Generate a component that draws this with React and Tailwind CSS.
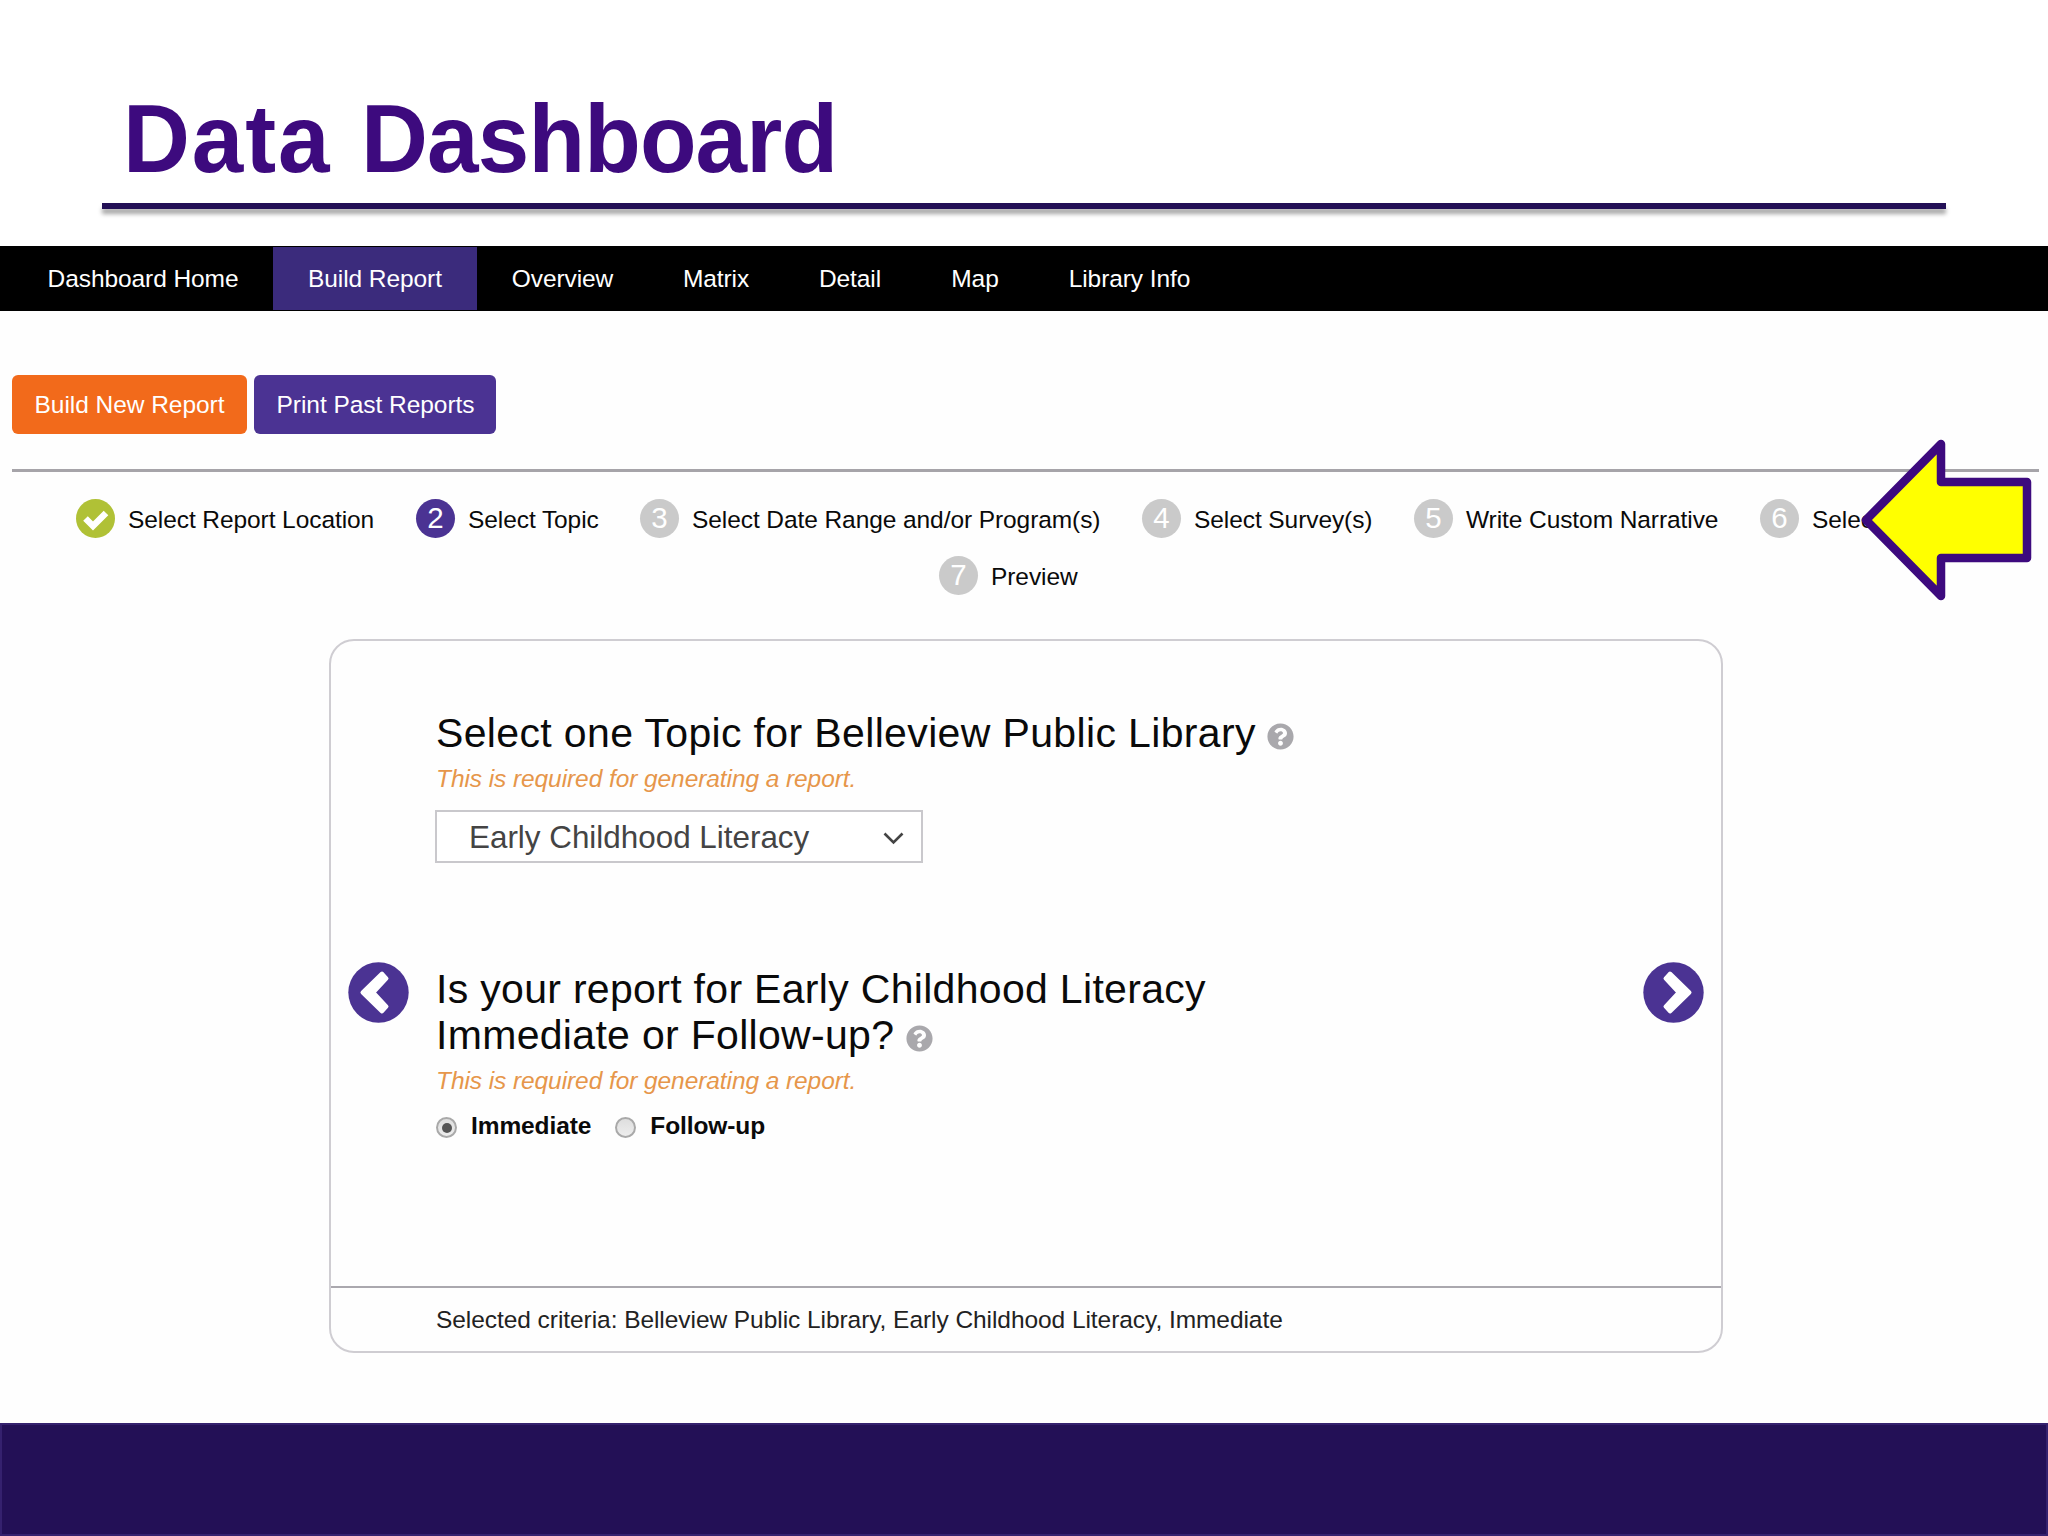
import { useState } from "react";
import { FaQuestionCircle } from "react-icons/fa";

const navItems = [
    { label: "Dashboard Home", width: "w-[260px]" },
    { label: "Build Report", width: "w-[204px]", active: true },
    { label: "Overview", width: "w-[171px]" },
    { label: "Matrix", width: "w-[136px]" },
    { label: "Detail", width: "w-[132px]" },
    { label: "Map", width: "w-[118px]" },
    { label: "Library Info", width: "w-[191px]" },
];

const steps = [
    { id: 1, label: "Select Report Location", width: "w-[340px]", status: "done" },
    { id: 2, label: "Select Topic", width: "w-[224px]", status: "current" },
    { id: 3, label: "Select Date Range and/or Program(s)", width: "w-[502px]" },
    { id: 4, label: "Select Survey(s)", width: "w-[272px]" },
    { id: 5, label: "Write Custom Narrative", width: "w-[346px]" },
    { id: 6, label: "Select", width: "w-[200px]" },
];

const topics = ["Early Childhood Literacy"];

function StepBadge({ id, status }) {
    if (status === "done") {
        return (
            <svg className="h-[39px] w-[39px] shrink-0" viewBox="0 0 39 39">
                <circle cx="19.5" cy="19.5" r="19.5" fill="#b0c136" />
                <polyline
                    points="9.5,19.5 17,27 30,14"
                    fill="none"
                    stroke="#fff"
                    strokeWidth="6.5"
                />
            </svg>
        );
    }
    return (
        <span
            className={`flex h-[39px] w-[39px] shrink-0 items-center justify-center rounded-full pb-0.5 text-[29.5px] leading-none text-white ${
                status === "current" ? "bg-[#4b3393]" : "bg-[#cacaca]"
            }`}
        >
            {id}
        </span>
    );
}

function Step({ step }) {
    return (
        <li className={`flex h-[39px] shrink-0 items-center gap-[13px] ${step.width || ""}`}>
            <StepBadge id={step.id} status={step.status} />
            <span className="pt-[3px] tracking-[-0.08px] whitespace-nowrap">{step.label}</span>
        </li>
    );
}

function RoundArrow({ direction }) {
    return (
        <button className="mt-[321px] h-[61px] w-[61px] shrink-0" aria-label={direction}>
            <svg
                className={direction === "next" ? "h-full w-full -scale-x-100" : "h-full w-full"}
                viewBox="0 0 61 61"
            >
                <circle cx="30.5" cy="30.5" r="30.2" fill="#4b3393" />
                <path
                    d="M14.5 30.5 L34 11.5 L38.5 16.5 L25.5 30.5 L38.5 44.5 L34 49.5 Z"
                    fill="#fff"
                    stroke="#fff"
                    strokeWidth="4"
                    strokeLinejoin="round"
                />
            </svg>
        </button>
    );
}

function HelpIcon() {
    return <FaQuestionCircle className="mt-[7px] h-[27px] w-[27px] text-[#a9a8ac]" />;
}

function RequiredNote() {
    return (
        <p className="mt-[9px] text-[24.5px] leading-7 tracking-[-0.08px] text-[#e6964a] italic">
            This is required for generating a report.
        </p>
    );
}

function Radio({ label, checked, onChange }) {
    return (
        <label className="flex items-center gap-[14px] text-[24.5px] leading-7 font-bold tracking-[-0.1px]">
            <input type="radio" className="sr-only" checked={checked} onChange={onChange} />
            <span className="mt-[3px] flex h-[21px] w-[21px] items-center justify-center rounded-full border-2 border-[#a9a9a9] bg-gradient-to-b from-[#dedede] to-[#ededed]">
                {checked && <span className="h-[10px] w-[10px] rounded-full bg-[#555]" />}
            </span>
            {label}
        </label>
    );
}

export default function App() {
    const [topic] = useState(topics[0]);
    const [timing, setTiming] = useState("Immediate");

    return (
        <div className="relative flex h-[1536px] w-[2048px] flex-col overflow-hidden bg-[#fefefe] font-['Liberation_Sans',Arial,sans-serif] text-[24.5px] text-[#0a0a0a]">
            {/* Slide title */}
            <header className="h-[246px] shrink-0 bg-white pt-[83px] pl-[102px]">
                <h1 className="ml-[21px] h-[120px] w-max origin-left scale-x-[0.955] text-[97px] leading-[111px] font-bold tracking-[-0.9px] text-[#3d0a7e] [word-spacing:5px]">
                    <span className="tracking-[2px]">Data</span> Dashboard
                </h1>
                <div className="h-1.5 w-[1844px] bg-[#231056] shadow-[0_5px_4px_rgba(0,0,0,0.35)]" />
            </header>

            <nav className="flex h-[65px] shrink-0 bg-black py-px pl-[13px] text-white">
                {navItems.map((item) => (
                    <a
                        key={item.label}
                        className={`flex items-center justify-center pt-0.5 tracking-[-0.08px] whitespace-nowrap ${item.width} ${
                            item.active ? "bg-[#3b2b7c]" : ""
                        }`}
                    >
                        {item.label}
                    </a>
                ))}
            </nav>

            <main className="flex flex-1 flex-col pt-[64px]">
                <div className="ml-3 flex gap-[7px] tracking-[-0.05px] text-white">
                    <button className="h-[59px] w-[235px] rounded-md bg-[#f26a1b] pt-px">
                        Build New Report
                    </button>
                    <button className="h-[59px] w-[242px] rounded-md bg-[#4b3393] pt-px pl-px">
                        Print Past Reports
                    </button>
                </div>

                <div className="mt-[35px] mr-[9px] ml-3 h-[3px] shrink-0 bg-[#a6a4a9]" />

                {/* Wizard steps */}
                <ol className="mt-[27px] flex pl-[76px]">
                    {steps.map((step) => (
                        <Step key={step.id} step={step} />
                    ))}
                </ol>
                <ol className="mt-[18px] flex pl-[939px]">
                    <Step step={{ id: 7, label: "Preview" }} />
                </ol>

                <section className="mt-[44px] ml-[329px] flex h-[714px] w-[1394px] flex-col rounded-[25px] border-2 border-[#cfcdd2]">
                    <div className="flex flex-1 px-[17px]">
                        <RoundArrow direction="previous" />

                        <div className="ml-[27px] flex-1 pt-[69px]">
                            <h2 className="flex items-center gap-[11px] text-[41px] leading-[46px] tracking-[0.36px]">
                                Select one Topic for Belleview Public Library
                                <HelpIcon />
                            </h2>
                            <RequiredNote />
                            <button className="mt-[17px] -ml-px flex h-[53px] w-[488px] items-center justify-between border-2 border-[#c9c8cc] bg-white pt-0.5 pr-[17px] pl-8 text-[31.4px] text-[#444]">
                                {topic}
                                <svg
                                    className="mt-0.5 h-[13px] w-[21px]"
                                    viewBox="0 0 21 13"
                                    fill="none"
                                    stroke="#444"
                                    strokeWidth="2.6"
                                >
                                    <path d="M1.5 1.5 L10.5 10.5 L19.5 1.5" />
                                </svg>
                            </button>

                            <h2 className="mt-[104px] text-[41px] leading-[45.5px] tracking-[0.31px]">
                                <span className="block">Is your report for Early Childhood Literacy</span>
                                <span className="flex items-center gap-[12px]">
                                    Immediate or Follow-up?
                                    <HelpIcon />
                                </span>
                            </h2>
                            <RequiredNote />
                            <div className="mt-[17px] flex gap-[24px]">
                                {["Immediate", "Follow-up"].map((value) => (
                                    <Radio
                                        key={value}
                                        label={value}
                                        checked={timing === value}
                                        onChange={() => setTiming(value)}
                                    />
                                ))}
                            </div>
                        </div>

                        <RoundArrow direction="next" />
                    </div>

                    <p className="flex h-[65px] items-center border-t-2 border-[#aaa8ae] pt-px pl-[105px] tracking-[-0.06px] text-[#222]">
                        Selected criteria: Belleview Public Library, {topic}, {timing}
                    </p>
                </section>
            </main>

            <footer className="h-[113px] shrink-0 border-2 border-[#35216e] bg-[#231056]" />

            {/* Callout arrow over the last step */}
            <svg
                className="absolute top-[430px] left-[1850px] h-[180px] w-[190px]"
                viewBox="1850 430 190 180"
            >
                <polygon
                    points="1866,520 1941,444 1941,482 2027,482 2027,558 1941,558 1941,596"
                    fill="#ff0"
                    stroke="#3d0a7e"
                    strokeWidth="8.5"
                    strokeLinejoin="round"
                />
            </svg>
        </div>
    );
}
